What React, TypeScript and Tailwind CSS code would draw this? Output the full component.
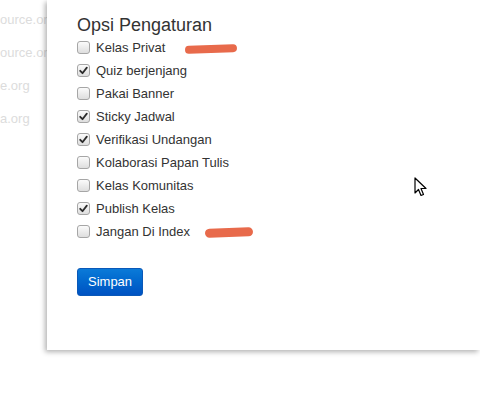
import React from 'react';

const OPTIONS = [
  { label: 'Kelas Privat', checked: false, mark: 'top' },
  { label: 'Quiz berjenjang', checked: true },
  { label: 'Pakai Banner', checked: false },
  { label: 'Sticky Jadwal', checked: true },
  { label: 'Verifikasi Undangan', checked: true },
  { label: 'Kolaborasi Papan Tulis', checked: false },
  { label: 'Kelas Komunitas', checked: false },
  { label: 'Publish Kelas', checked: true },
  { label: 'Jangan Di Index', checked: false, mark: 'bottom' },
];

const SIDE = ['ource.org', 'ource.org', 'e.org', 'a.org'];

const Box: React.FC<{ checked: boolean }> = ({ checked }) => (
  <span className="flex h-[13px] w-[13px] shrink-0 items-center justify-center rounded-[3px] border border-[#a6a6a6] bg-gradient-to-b from-[#fbfbfb] to-[#dedede]">
    {checked && (
      <svg width="9" height="9" viewBox="0 0 9 9">
        <path d="M1.2 4.8 L3.5 7.2 L7.8 1.6" fill="none" stroke="#2b2b2b" strokeWidth="1.8" strokeLinecap="round" strokeLinejoin="round" />
      </svg>
    )}
  </span>
);

export default function App() {
  return (
    <div className="relative flex h-[393px] w-[480px] overflow-hidden bg-white" style={{ fontFamily: '"Liberation Sans", Arial, sans-serif' }}>
      {/* faded page behind */}
      <div className="flex w-[47px] shrink-0 flex-col overflow-hidden pt-[11px]">
        {SIDE.map((s, i) => (
          <p key={i} className="h-[33px] whitespace-nowrap text-[13px] leading-[18px] text-[#dcdcdc]">{s}</p>
        ))}
      </div>

      {/* settings panel */}
      <div className="flex h-[350px] flex-1 flex-col bg-white pl-[30px] pt-[14px] shadow-[-2px_2px_5px_rgba(0,0,0,0.3)]">
        <h2 className="text-[18px] leading-[22px] text-[#333]">Opsi Pengaturan</h2>
        <div className="flex flex-col">
          {OPTIONS.map((o) => (
            <label key={o.label} className="flex h-[23px] items-center gap-[6px] text-[13px] leading-[16px] text-[#333]">
              <Box checked={o.checked} />
              <span>{o.label}</span>
              {o.mark === 'top' && (
                <span className="ml-[14px] mt-[2px] h-[8px] w-[52px] -rotate-2 rounded-full bg-[#e86a4b]" />
              )}
              {o.mark === 'bottom' && (
                <span className="ml-[9px] mt-[2px] h-[9px] w-[48px] -rotate-2 rounded-full bg-[#e86a4b]" />
              )}
            </label>
          ))}
        </div>
        <div className="mt-[25px]">
          <button className="h-[28px] rounded-[3px] border border-[#0a58b8] bg-gradient-to-b from-[#0b7ad8] to-[#0052c2] px-[10px] text-[13px] text-white">
            Simpan
          </button>
        </div>
      </div>

      {/* mouse cursor */}
      <svg className="absolute left-[414px] top-[177px]" width="14" height="21" viewBox="0 0 14 21">
        <path d="M1 1 L1 16 L4.5 12.5 L7 18.5 L9.5 17.5 L7 11.5 L12 11.5 Z" fill="white" stroke="black" strokeWidth="1.2" strokeLinejoin="round" />
      </svg>
    </div>
  );
}
